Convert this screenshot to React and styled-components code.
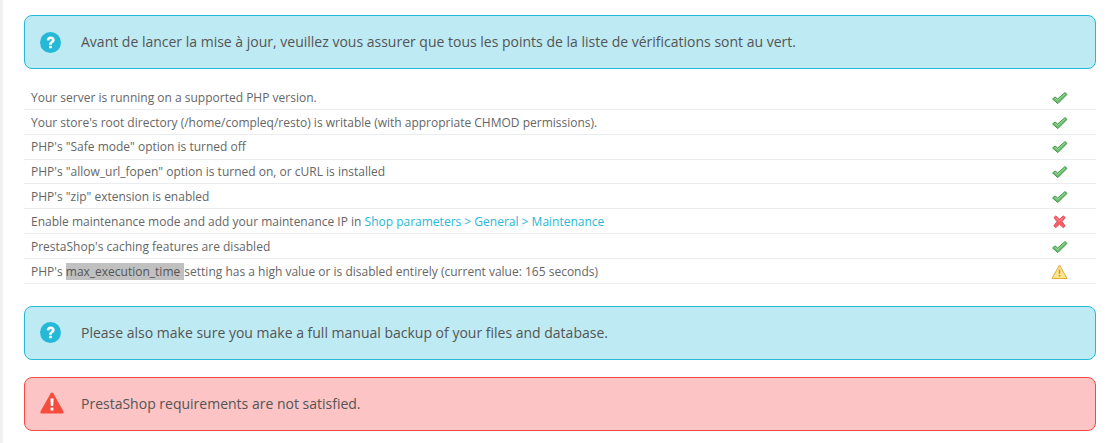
import React from "react";
import styled, { createGlobalStyle } from "styled-components";

const Global = createGlobalStyle`
  html, body { margin: 0; padding: 0; background: #fff; }
  body { font-family: "Open Sans", "Liberation Sans", sans-serif; font-size: 12px; color: #666; overflow: hidden; }
`;
const Page = styled.div`
  box-sizing: border-box;
  height: 443px;
  border-left: 3px solid #eff1f2;
  padding: 15px 12px 0 21px;
`;
const Alert = styled.div`
  box-sizing: border-box;
  height: 54px;
  display: flex;
  align-items: center;
  padding-left: 15px;
  margin-bottom: ${(p) => p.$mb || 0}px;
  border-radius: 8px;
  border: 1px solid ${(p) => (p.$danger ? "#f54c3e" : "#25b9d7")};
  background: ${(p) => (p.$danger ? "#fcc4c4" : "#bdeaf3")};
  color: #555;
  font-size: 14px;
`;
const AlertIcon = styled.span`
  width: 24px;
  height: 24px;
  margin-right: 17px;
  margin-top: ${(p) => (p.$raised ? -2 : 0)}px;
  flex: none;
  display: flex;
  align-items: center;
  justify-content: flex-start;
  svg { display: block; }
`;
const AlertText = styled.span`
  margin-top: ${(p) => (p.$up ? -2 : 0)}px;
`;
const Table = styled.div`
  margin: 16px 0 22px;
`;
const Row = styled.div`
  box-sizing: border-box;
  height: 24.85px;
  display: flex;
  align-items: center;
  border-bottom: 1px solid #eaedef;
  padding: 0.6px 0 0 7px;
  color: #666;
`;
const RowText = styled.div`
  flex: 1;
  white-space: nowrap;
`;
const Status = styled.div`
  width: 88px;
  flex: none;
  display: flex;
  padding: 1px 0 0 43px;
  box-sizing: border-box;
  svg { display: block; }
`;
const Link = styled.a`
  color: #25b9d7;
  text-decoration: none;
`;
const Selected = styled.span`
  background: #c0c0c0;
  color: #555;
  padding: 0 1px 0 0;
`;

const Check = () => (
  <svg width="17" height="16" viewBox="0 0 17 16">
    <path d="M1.6 9 L4 6.9 L6.6 9 L14 2.6 L16 4.4 L6.8 13.6 Z" fill="#6cbb6c" stroke="#3f9a4b" strokeWidth="1" strokeLinejoin="round" />
    <path d="M3.8 8.2 L6.6 10.5 L14 3.9" fill="none" stroke="#a4dca4" strokeWidth="1" />
  </svg>
);
const Cross = () => (
  <svg width="17" height="16" viewBox="0 0 17 16">
    <path d="M3 3.5 L4.8 2 L8.5 5.2 L12.2 2 L14.2 3.5 L11 7.6 L14.2 12 L12.2 13.6 L8.5 10.2 L4.8 13.6 L2.8 12 L6 7.6 Z" fill="#f2606a" stroke="#ea4d56" strokeWidth="1" strokeLinejoin="round" />
    <path d="M5 3.8 L8.5 6.8 L12 3.8" fill="none" stroke="#fb9aa0" strokeWidth="0.9" />
  </svg>
);
const Warn = () => (
  <svg width="17" height="16" viewBox="0 0 17 16">
    <path d="M8.5 1 L16 14.5 L1 14.5 Z" fill="#fbe690" stroke="#e2a83a" strokeWidth="1" strokeLinejoin="round" />
    <path d="M7.7 5.6 H9.3 L9.1 10 H7.9 Z M7.7 11 H9.3 V12.6 H7.7 Z" fill="#d8922a" />
  </svg>
);
const Question = () => (
  <svg width="21" height="21" viewBox="0 0 24 24">
    <circle cx="12" cy="12" r="12" fill="#25b9d7" />
    <path d="M7.6 9.4 C7.8 6.7 9.7 5 12.2 5 C14.8 5 16.8 6.7 16.8 9 C16.8 10.8 15.8 11.7 14.5 12.6 C13.6 13.2 13.5 13.6 13.5 14.6 H10.4 C10.4 12.8 10.9 12 12.1 11.1 C13 10.4 13.4 10 13.4 9.2 C13.4 8.4 12.9 7.9 12.2 7.9 C11.3 7.9 10.8 8.6 10.7 9.8 Z" fill="#fff" />
    <rect x="10.4" y="15.6" width="3.1" height="3.1" rx="0.4" fill="#fff" />
  </svg>
);
const Danger = () => (
  <svg width="24" height="22" viewBox="0 0 24 22">
    <path d="M12 0.5 C12.6 0.5 13 0.8 13.3 1.3 L23.5 19.6 C24 20.6 23.5 21.5 22.4 21.5 H1.6 C0.5 21.5 0 20.6 0.5 19.6 L10.7 1.3 C11 0.8 11.4 0.5 12 0.5 Z" fill="#f54c3e" />
    <path d="M10.4 6.5 H13.6 L13.2 14 H10.8 Z" fill="#fff" />
    <rect x="10.6" y="15.6" width="2.8" height="3" fill="#fff" />
  </svg>
);

const rows = [
  ["ok", <>Your server is running on a supported PHP version.</>],
  ["ok", <>Your store's root directory (/home/compleq/resto) is writable (with appropriate CHMOD permissions).</>],
  ["ok", <>PHP's "Safe mode" option is turned off</>],
  ["ok", <>PHP's "allow_url_fopen" option is turned on, or cURL is installed</>],
  ["ok", <>PHP's "zip" extension is enabled</>],
  ["bad", <>Enable maintenance mode and add your maintenance IP in <Link href="#">Shop parameters &gt; General &gt; Maintenance</Link></>],
  ["ok", <>PrestaShop's caching features are disabled</>],
  ["warn", <>PHP's <Selected>max_execution_time </Selected>setting has a high value or is disabled entirely (current value: 165 seconds)</>],
];
const icons = { ok: <Check />, bad: <Cross />, warn: <Warn /> };

export default function App() {
  return (
    <Page>
      <Global />
      <Alert>
        <AlertIcon><Question /></AlertIcon>
        <AlertText $up>Avant de lancer la mise à jour, veuillez vous assurer que tous les points de la liste de vérifications sont au vert.</AlertText>
      </Alert>
      <Table>
        {rows.map(([s, t], i) => (
          <Row key={i}>
            <RowText>{t}</RowText>
            <Status>{icons[s]}</Status>
          </Row>
        ))}
      </Table>
      <Alert $mb={17}>
        <AlertIcon><Question /></AlertIcon>
        <AlertText>Please also make sure you make a full manual backup of your files and database.</AlertText>
      </Alert>
      <Alert $danger>
        <AlertIcon $raised><Danger /></AlertIcon>
        <AlertText>PrestaShop requirements are not satisfied.</AlertText>
      </Alert>
    </Page>
  );
}
